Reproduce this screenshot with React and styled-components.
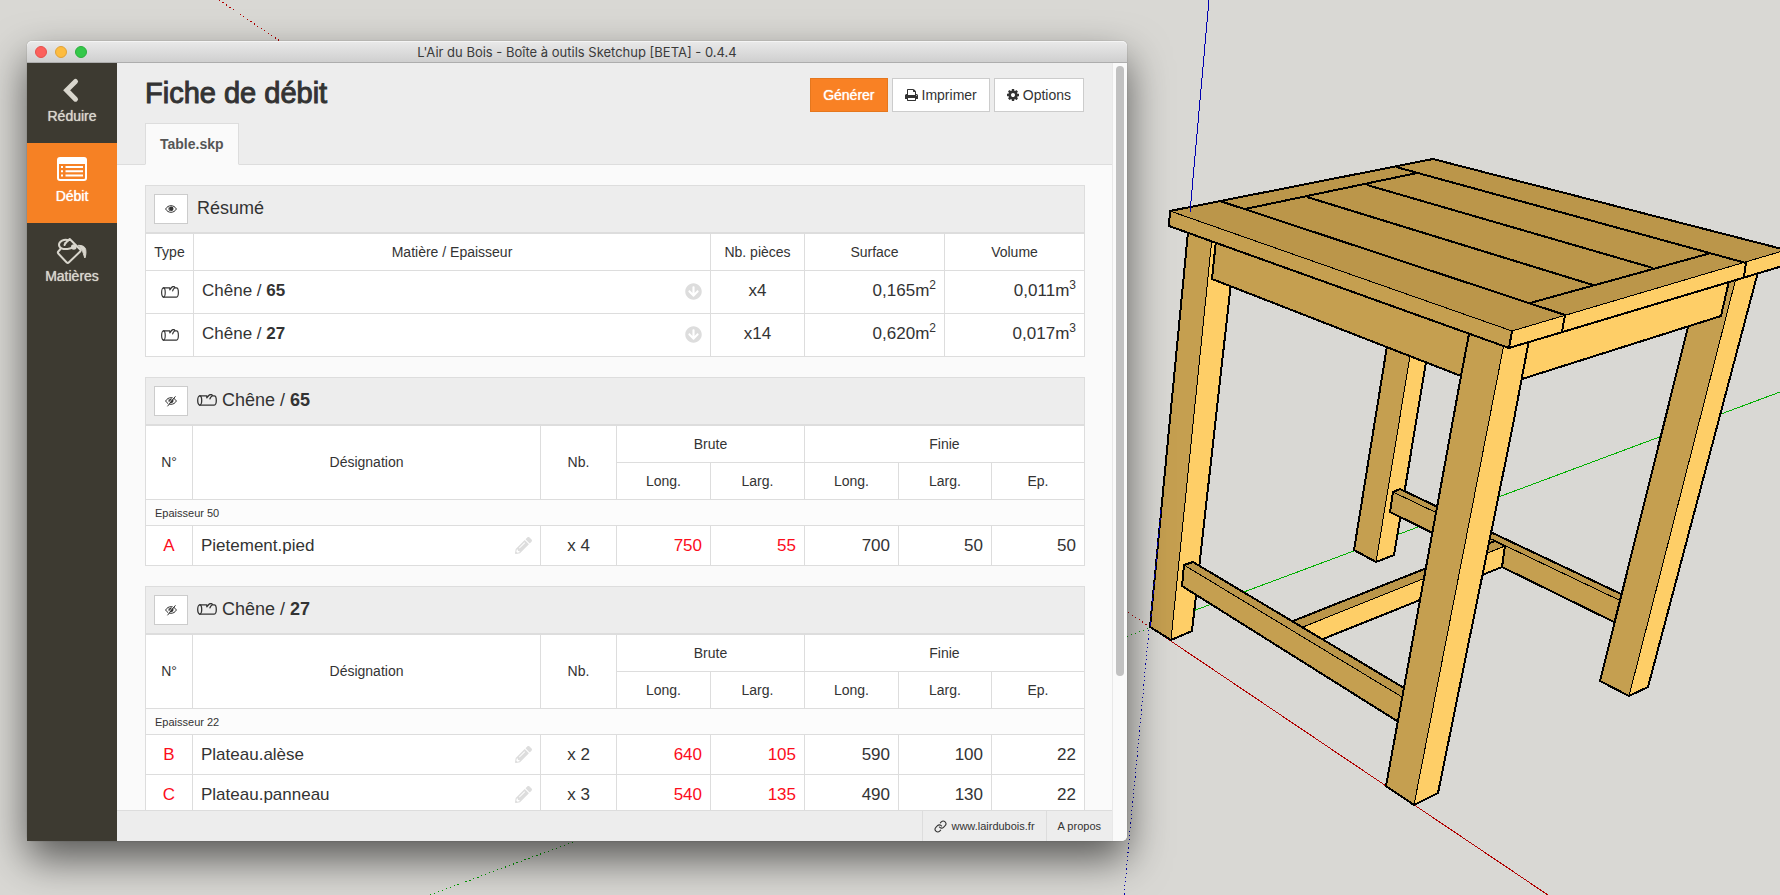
import React from "react";
import styled, { createGlobalStyle, css } from "styled-components";
import { FaArrowCircleDown, FaPencilAlt } from "react-icons/fa";
import { Link as LinkIcon } from "lucide-react";

const Global = createGlobalStyle`
  * { box-sizing: border-box; }
  body {
    margin: 0;
    background: #d9d8d4;
    color: #333;
    font: 14px/20px "Liberation Sans", Arial, sans-serif;
    overflow: hidden;
  }
  button { font: inherit; color: inherit; cursor: pointer; }
`;

const Desktop = styled.div`
  position: relative;
  display: flex;
  height: 100vh;
  padding: 41px 653px 54px 27px;
  overflow: hidden;
`;

const Scene = styled.svg`
  position: absolute;
  inset: 0;
  width: 100%;
  height: 100%;
  shape-rendering: crispEdges;
`;

const Window = styled.section`
  position: relative;
  flex: 1;
  min-width: 0;
  display: flex;
  flex-direction: column;
  border-radius: 5px;
  background: #fafafa;
  box-shadow: 0 0 1px rgba(0, 0, 0, 0.5), 0 18px 42px rgba(0, 0, 0, 0.6);
`;

const TitleBar = styled.header`
  display: flex;
  align-items: center;
  height: 22px;
  padding: 0 8px;
  border-bottom: 1px solid #adadad;
  border-radius: 5px 5px 0 0;
  background: linear-gradient(#eaeaea, #cfcfcf);
  box-shadow: inset 0 1px #f4f4f4;
`;

const Lights = styled.div`
  display: flex;
  gap: 8px;
  width: 60px;
`;

const Light = styled.button`
  width: 12px;
  height: 12px;
  padding: 0;
  border: 1px solid ${(p) => p.$edge};
  border-radius: 50%;
  background: ${(p) => p.$fill};
`;

const WindowTitle = styled.span`
  flex: 1;
  padding-right: 60px;
  text-align: center;
  white-space: nowrap;
  font: 13px/20px Inter, sans-serif;
  color: #3a3a3a;
`;

const Main = styled.div`
  flex: 1;
  min-height: 0;
  display: flex;
`;

const Sidebar = styled.nav`
  flex: none;
  width: 90px;
  background: #3d3a31;
`;

const NavButton = styled.button`
  display: flex;
  flex-direction: column;
  align-items: center;
  width: 100%;
  height: 80px;
  padding: 14px 0 0;
  border: 0;
  background: ${(p) => (p.$active ? "#f68124" : "transparent")};
  color: ${(p) => (p.$active ? "#fff" : "#d9d6cd")};
  line-height: 26px;
  text-shadow: 0 0 1px currentColor;

  svg { overflow: visible; }
`;

const Content = styled.div`
  flex: 1;
  min-width: 0;
  display: flex;
  flex-direction: column;
`;

const PageHeader = styled.div`
  flex: none;
  padding: 15px 28px 0;
  border-bottom: 1px solid #ddd;
  background: #ededed;
`;

const TitleRow = styled.div`
  display: flex;
  justify-content: space-between;
  align-items: flex-start;
`;

const PageTitle = styled.h1`
  margin: 0;
  font-size: 29px;
  line-height: 30px;
  font-weight: 400;
  -webkit-text-stroke: 1px currentColor;
`;

const Toolbar = styled.div`
  display: flex;
  gap: 4px;
`;

const Button = styled.button`
  display: flex;
  align-items: center;
  gap: 4px;
  height: 34px;
  padding: 0 12px;
  border: 1px solid #ccc;
  background: #fff;
  ${(p) =>
    p.$primary &&
    css`
      border-color: #e5771e;
      background: #f98124;
      color: #fff;
      text-shadow: 0 0 1px currentColor;
    `}
`;

const Tabs = styled.div`
  display: flex;
  margin: 11px 0 -1px;
`;

const Tab = styled.button`
  height: 42px;
  padding: 0 14px;
  border: 1px solid #ddd;
  border-bottom-color: #fafafa;
  background: #fafafa;
  color: #555;
  font-weight: 700;
`;

const Body = styled.main`
  flex: 1;
  min-height: 0;
  padding: 20px 27px 20px 28px;
  overflow-y: auto;
  scrollbar-width: none;
`;

const Panel = styled.section`
  margin-bottom: 20px;
`;

const PanelHead = styled.div`
  display: flex;
  align-items: center;
  gap: 9px;
  height: 48px;
  padding: 0 8px;
  border: 1px solid #ddd;
  background: #ededed;
`;

const ToggleButton = styled.button`
  display: grid;
  place-items: center;
  width: 34px;
  height: 30px;
  padding: 0;
  border: 1px solid #ccc;
  background: #fff;
`;

const PanelTitle = styled.h2`
  display: flex;
  align-items: center;
  gap: 5px;
  margin: 0;
  padding-bottom: 2px;
  font-size: 18px;
  line-height: 24px;
  font-weight: 400;
  white-space: pre;
`;

const Table = styled.table`
  width: 100%;
  table-layout: fixed;
  border-collapse: separate;
  border-spacing: 0;
  border: solid #ddd;
  border-width: 0 1px 1px 0;
  background: #fff;
`;

const Th = styled.th`
  height: 37px;
  padding: 0;
  border: solid #ddd;
  border-width: 1px 0 0 1px;
  font-weight: 400;

  &[rowspan] { padding-bottom: 2px; }
`;

const GroupTh = styled.th`
  height: 26px;
  padding: 0 9px;
  border: solid #ddd;
  border-width: 1px 0 0 1px;
  background: #fcfcfc;
  font-size: 11px;
  line-height: 16px;
  font-weight: 400;
  text-align: left;
`;

const Td = styled.td`
  height: ${(p) => (p.$summary ? 43 : 40)}px;
  padding: 0 8px ${(p) => (p.$summary && !p.$icon ? 2 : 0)}px;
  border: solid #ddd;
  border-width: 1px 0 0 1px;
  font-size: 17px;
  text-align: ${(p) => p.$align || "left"};
  color: ${(p) => (p.$red ? "#fc0d1b" : "inherit")};

  & > svg { display: block; margin: 0 auto; }
`;

const Split = styled.div`
  display: flex;
  align-items: center;
  justify-content: space-between;
`;

const RowAction = styled.button`
  display: flex;
  padding: 0;
  border: 0;
  background: none;
  color: #ddd;
`;

const Sup = styled.sup`
  font-size: 12px;
  line-height: 0;
  vertical-align: 7px;
`;

const Footer = styled.footer`
  flex: none;
  display: flex;
  justify-content: flex-end;
  height: 31px;
  border-top: 1px solid #ddd;
  background: #ededed;
`;

const FooterLink = styled.a`
  display: flex;
  align-items: center;
  gap: 4px;
  padding: 0 11px;
  border-left: 1px solid #ddd;
  color: #333;
  font-size: 11px;
  text-decoration: none;
`;

const Track = styled.div`
  flex: none;
  width: 15px;
  padding: 3px;
  border-left: 1px solid #e8e8e8;
  border-radius: 0 0 5px 0;
  background: #fafafa;
`;

const Thumb = styled.div`
  width: 8px;
  height: 79%;
  border-radius: 4px;
  background: #c1c1c1;
`;

const ChevronIcon = () => (
  <svg width="30" height="26" viewBox="0 0 30 26" fill="none" stroke="currentColor" strokeWidth="5" strokeLinecap="round" strokeLinejoin="miter">
    <path d="M18.500 4.500 9.700 13.300l8.800 8.900" />
  </svg>
);

const ListIcon = () => (
  <svg width="30" height="26" viewBox="0 0 30 26" fill="none" stroke="currentColor">
    <path d="M1 4v17a2 2 0 0 0 2 2h24a2 2 0 0 0 2-2V4" strokeWidth="2" />
    <path d="M0 7V3a3 3 0 0 1 3-3h24a3 3 0 0 1 3 3v4z" fill="currentColor" stroke="none" />
    <path d="M4 10h2M4 14.300h2M4 18.600h2M8.500 10H26M8.500 14.300H26M8.500 18.600H26" strokeWidth="2" />
  </svg>
);

const BucketIcon = () => (
  <svg width="32" height="26" viewBox="0 0 32 26" fill="none" stroke="currentColor" strokeWidth="2" strokeLinejoin="round" strokeLinecap="round">
    <path d="M9.500 6 13.700 2l10.500 10.500a1.500 1.500 0 0 1 0 2L13 25.300a1.800 1.800 0 0 1-2.500 0L2.300 16.500a1.500 1.500 0 0 1 0-2L4.500 12" />
    <path d="M12.500 3.200C8 1.500 3 4.500 3 7.800s4 4.700 8.500 4.200c2.500-.3 4.500-1 6-1.800M9.500 6 8.500 8" />
    <circle cx="17.800" cy="10" r="1.800" fill="currentColor" />
    <path d="M22.500 8.300c4 0 6.500 1.200 7.200 4.200.5 2.500.2 6-.8 8.500-1.400-2.500-1.400-6.500-3.400-8.200z" fill="currentColor" strokeWidth="1" />
  </svg>
);

const PrintIcon = () => (
  <svg width="13" height="14" viewBox="0 128 1664 1536" fill="currentColor">
    <path d="M384 1536h896v-256h-896v256zM384 896h896v-384h-160q-40 0-68-28t-28-68v-160h-640v640zM1536 960q0-26-19-45t-45-19-45 19-19 45 19 45 45 19 45-19 19-45zM1664 960v416q0 13-9.500 22.500t-22.500 9.500h-224v160q0 40-28 68t-68 28h-960q-40 0-68-28t-28-68v-160h-224q-13 0-22.500-9.500t-9.500-22.500v-416q0-79 56.500-135.500t135.500-56.500h64v-544q0-40 28-68t68-28h672q40 0 88 20t76 48l152 152q28 28 48 76t20 88v256h64q79 0 135.500 56.500t56.500 135.500z" />
  </svg>
);

const GearIcon = () => (
  <svg width="12" height="12" viewBox="128 128 1536 1536" fill="currentColor">
    <path d="M1152 896q0-106-75-181t-181-75-181 75-75 181 75 181 181 75 181-75 75-181zm512-109v222q0 12-8 23t-20 13l-185 28q-19 54-39 91 35 50 107 138 10 12 10 25t-9 23q-27 37-99 108t-94 71q-12 0-26-9l-138-108q-44 23-91 38-16 136-29 186-7 28-36 28h-222q-14 0-24.500-8.500t-11.500-21.500l-28-184q-49-16-90-37l-141 107q-10 9-25 9-14 0-25-11-126-114-165-168-7-10-7-23 0-12 8-23 15-21 51-66.500t54-70.500q-27-50-41-99l-183-27q-13-2-21-12.500t-8-23.500v-222q0-12 8-23t19-13l186-28q14-46 39-92-40-57-107-138-10-12-10-24 0-10 9-23 26-36 98.500-107.500t94.500-71.500q13 0 26 10l138 107q44-23 91-38 16-136 29-186 7-28 36-28h222q14 0 24.500 8.500t11.500 21.500l28 184q49 16 90 37l142-107q9-9 24-9 13 0 25 10 129 119 165 170 7 8 7 22 0 12-8 23-15 21-51 66.500t-54 70.500q26 50 41 98l183 28q13 2 21 12.500t8 23.500z" />
  </svg>
);

const EyeIcon = ({ closed }) => (
  <svg width="12" height="12" viewBox="0 0 12 12" fill="none" stroke="#333">
    <path d="M.6 6C2 3.700 3.800 2.700 6 2.700S10 3.700 11.400 6C10 8.300 8.200 9.300 6 9.300S2 8.300.6 6z" />
    <circle cx="6.300" cy="5.700" r="2.200" fill="#333" stroke="none" />
    <path d="M4.200 4.200c-.8 1.200-.4 3 .8 3.800" strokeWidth=".7" />
    {closed && (
      <>
        <path d="M1.700 10.800 10 .6" stroke="#fff" strokeWidth=".9" />
        <path d="M2.500 11.300 10.500 1.300" strokeWidth="1" />
      </>
    )}
  </svg>
);

const LogIcon = ({ size = 18 }) => (
  <svg width={size} height="12" viewBox="0 0 20 12" preserveAspectRatio="none" fill="none" stroke="#333" strokeWidth="1.300" strokeLinejoin="round" strokeLinecap="round">
    <ellipse cx="2.700" cy="6.500" rx="2" ry="4.700" />
    <path d="M2.700 1.800H9.800V3.800L12 1.300c1-.8 2.500-.8 3.200-.2.600.6-.2 1.100-.7 1.400-.8.500-1.200 1.300-1.500 2.300M15.300 1.900h1.900c1.300 0 2.100 2 2.100 4.600s-.8 4.700-2.100 4.700H2.700" />
  </svg>
);

const BLACK = "#000";
const TOP = "#bb964a";
const DARK = "#c59f50";
const LIGHT = "#fece67";

const Face = ({ c, p }) => <polygon fill={c} points={p} />;
const Thick = ({ d }) => <path d={d} fill="none" stroke={BLACK} strokeWidth="2" />;
const Thin = ({ d }) => <path d={d} fill="none" stroke={BLACK} strokeWidth="1" />;
const Axis = ({ d, c, dotted }) => (
  <path d={d} fill="none" stroke={c} strokeWidth="1" strokeDasharray={dotted ? "1.200 3" : undefined} />
);

const TableModel = () => (
  <Scene viewBox="0 0 1780 895" preserveAspectRatio="xMaxYMin slice" aria-hidden="true">
    <Axis c="#b00000" dotted d="M219 0 1150 627" />
    <Axis c="#00a000" dotted d="M430 895 1150 628" />
    <Axis c="#0000b0" dotted d="M1149 630 1124 895" />
    <Axis c="#00b000" d="M1150 627 1780 392" />
    <Axis c="#b00000" d="M1150 627 1548 895" />

    {/* back leg */}
    <Face c={DARK} p="1388,340 1354,550 1376,562 1411,350" />
    <Face c={LIGHT} p="1411,350 1376,562 1394,555 1428,350" />
    <Thick d="M1388 340 1354 550 1376 562 1394 555 1428 350" />
    <Thin d="M1411 350 1376 562" />

    {/* right stretcher */}
    <Face c={DARK} p="1393,492 1621,601 1614,622 1390,512" />
    <Face c={TOP} p="1393,492 1400,489 1621,594 1621,601" />
    <Thick d="M1621 594 1400 489 1393 492 1390 512 1614 622" />
    <Thin d="M1393 492 1621 601" />

    {/* cross stretcher */}
    <Face c={TOP} p="1293,621 1495,541 1505,546 1303,627" />
    <Face c={LIGHT} p="1303,627 1505,546 1502,567 1323,640" />
    <Thick d="M1293 621 1495 541 1505 546 1502 567 1323 639" />
    <Thin d="M1303 627 1505 546" />

    {/* left leg */}
    <Face c={DARK} p="1188,230 1150,627 1171,640 1212,238" />
    <Face c={LIGHT} p="1212,238 1171,640 1192,631 1236,238" />
    <Thick d="M1188 232 1150 627 1171 640 1192 631 1236 238" />
    <Thin d="M1212 238 1171 640" />
    <path d="M1161 510 1150 627" stroke="#0000c0" strokeWidth="1" strokeDasharray="4 4" />

    {/* left stretcher */}
    <Face c={DARK} p="1184,565 1402,697 1397,721 1182,586" />
    <Face c={TOP} p="1184,565 1193,562 1404,688 1402,697" />
    <Thick d="M1404 688 1193 562 1184 565 1182 586 1397 721" />
    <Thin d="M1184 565 1402 697" />

    {/* right leg */}
    <Face c={DARK} p="1700,280 1688,327 1600,681 1629,696 1737,274" />
    <Face c={LIGHT} p="1737,274 1629,696 1648,687 1758,270" />
    <Thick d="M1688 327 1600 681 1629 696 1648 687 1758 272" />
    <Thin d="M1737 274 1629 696" />

    {/* aprons */}
    <Face c={DARK} p="1216,240 1212,279 1461,376 1469,330" />
    <Thick d="M1216 240 1212 279 1461 376" />
    <Face c={LIGHT} p="1529,340 1729,280 1721,316 1522,379" />
    <Thick d="M1729 281 1721 316 1522 379" />

    {/* front leg */}
    <Face c={DARK} p="1470,330 1386,786 1414,805 1504,344" />
    <Face c={LIGHT} p="1504,344 1414,805 1438,793 1529,340" />
    <Thick d="M1469 334 1461 376 1386 786 1414 805 1438 793 1512 430 1529 340" />
    <Thin d="M1504 344 1414 805" />

    {/* table top */}
    <Face c={TOP} p="1170,211 1433,159 1786,250 1512,331" />
    <Face c={DARK} p="1170,211 1512,331 1509,348 1169,226" />
    <Face c={LIGHT} p="1512,331 1786,250 1786,265 1509,348" />
    <Thick d="M1786 250 1433 159 1170 211 1169 226 1509 348 1786 265M1512 331 1509 348" />
    <Thin d="M1170 211 1512 331 1786 250" />
    <Thick d="M1220 201 1565 315 1562 332M1245 209 1417 173M1307 197 1593 285M1367 185 1653 268M1396 167 1746 263 1744 277M1530 303 1711 253" />
    <Axis c="#0000b0" d="M1190 212 1209 0" />
  </Scene>
);

const SUMMARY = [
  { thickness: "65", count: "x4", area: "0,165", volume: "0,011" },
  { thickness: "27", count: "x14", area: "0,620", volume: "0,017" },
];

const GROUPS = [
  {
    thickness: "65",
    finished: "50",
    parts: [{ id: "A", name: "Pietement.pied", count: "x 4", sizes: [750, 55, 700, 50, 50] }],
  },
  {
    thickness: "27",
    finished: "22",
    parts: [
      { id: "B", name: "Plateau.alèse", count: "x 2", sizes: [640, 105, 590, 100, 22] },
      { id: "C", name: "Plateau.panneau", count: "x 3", sizes: [540, 135, 490, 130, 22] },
    ],
  },
];

const Columns = ({ widths }) => (
  <colgroup>
    {widths.map((w, i) => (
      <col key={i} width={w || undefined} />
    ))}
  </colgroup>
);

const SummaryPanel = () => (
  <Panel>
    <PanelHead>
      <ToggleButton aria-label="Masquer le résumé">
        <EyeIcon />
      </ToggleButton>
      <PanelTitle>Résumé</PanelTitle>
    </PanelHead>
    <Table>
      <Columns widths={[48, null, 94, 140, 140]} />
      <thead>
        <tr>
          <Th>Type</Th>
          <Th>Matière / Epaisseur</Th>
          <Th>Nb. pièces</Th>
          <Th>Surface</Th>
          <Th>Volume</Th>
        </tr>
      </thead>
      <tbody>
        {SUMMARY.map((row) => (
          <tr key={row.thickness}>
            <Td $summary $icon $align="center">
              <LogIcon />
            </Td>
            <Td $summary>
              <Split>
                <span>
                  Chêne / <b>{row.thickness}</b>
                </span>
                <RowAction aria-label="Voir le groupe">
                  <FaArrowCircleDown size={17} />
                </RowAction>
              </Split>
            </Td>
            <Td $summary $align="center">{row.count}</Td>
            <Td $summary $align="right">
              {row.area}m<Sup>2</Sup>
            </Td>
            <Td $summary $align="right">
              {row.volume}m<Sup>3</Sup>
            </Td>
          </tr>
        ))}
      </tbody>
    </Table>
  </Panel>
);

const GroupPanel = ({ group }) => (
  <Panel>
    <PanelHead>
      <ToggleButton aria-label="Afficher le groupe">
        <EyeIcon closed />
      </ToggleButton>
      <PanelTitle>
        <LogIcon size={20} />
        <span>
          Chêne / <b>{group.thickness}</b>
        </span>
      </PanelTitle>
    </PanelHead>
    <Table>
      <Columns widths={[47, null, 76, 94, 94, 94, 93, 93]} />
      <thead>
        <tr>
          <Th rowSpan={2}>N°</Th>
          <Th rowSpan={2}>Désignation</Th>
          <Th rowSpan={2}>Nb.</Th>
          <Th colSpan={2}>Brute</Th>
          <Th colSpan={3}>Finie</Th>
        </tr>
        <tr>
          <Th>Long.</Th>
          <Th>Larg.</Th>
          <Th>Long.</Th>
          <Th>Larg.</Th>
          <Th>Ep.</Th>
        </tr>
      </thead>
      <tbody>
        <tr>
          <GroupTh colSpan={8}>Epaisseur {group.finished}</GroupTh>
        </tr>
        {group.parts.map((part) => (
          <tr key={part.id}>
            <Td $align="center" $red>{part.id}</Td>
            <Td>
              <Split>
                {part.name}
                <RowAction aria-label={`Modifier ${part.name}`}>
                  <FaPencilAlt size={17} />
                </RowAction>
              </Split>
            </Td>
            <Td $align="center">{part.count}</Td>
            {part.sizes.map((size, i) => (
              <Td key={i} $align="right" $red={i < 2}>{size}</Td>
            ))}
          </tr>
        ))}
      </tbody>
    </Table>
  </Panel>
);

export default function App() {
  return (
    <>
      <Global />
      <Desktop>
        <TableModel />
        <Window>
          <TitleBar>
            <Lights>
              <Light $fill="#fc605c" $edge="#e5504c" aria-label="Fermer" />
              <Light $fill="#fdbc40" $edge="#e0a238" aria-label="Réduire la fenêtre" />
              <Light $fill="#34c84a" $edge="#2bae3c" aria-label="Agrandir" />
            </Lights>
            <WindowTitle>L'Air du Bois - Boîte à outils Sketchup [BETA] - 0.4.4</WindowTitle>
          </TitleBar>
          <Main>
            <Sidebar>
              <NavButton>
                <ChevronIcon />
                Réduire
              </NavButton>
              <NavButton $active>
                <ListIcon />
                Débit
              </NavButton>
              <NavButton>
                <BucketIcon />
                Matières
              </NavButton>
            </Sidebar>
            <Content>
              <PageHeader>
                <TitleRow>
                  <PageTitle>Fiche de débit</PageTitle>
                  <Toolbar>
                    <Button $primary>Générer</Button>
                    <Button>
                      <PrintIcon />
                      Imprimer
                    </Button>
                    <Button>
                      <GearIcon />
                      Options
                    </Button>
                  </Toolbar>
                </TitleRow>
                <Tabs role="tablist">
                  <Tab role="tab" aria-selected="true">Table.skp</Tab>
                </Tabs>
              </PageHeader>
              <Body>
                <SummaryPanel />
                {GROUPS.map((group) => (
                  <GroupPanel key={group.thickness} group={group} />
                ))}
              </Body>
              <Footer>
                <FooterLink href="#site">
                  <LinkIcon size={13} />
                  www.lairdubois.fr
                </FooterLink>
                <FooterLink href="#about">A propos</FooterLink>
              </Footer>
            </Content>
            <Track>
              <Thumb />
            </Track>
          </Main>
        </Window>
      </Desktop>
    </>
  );
}
